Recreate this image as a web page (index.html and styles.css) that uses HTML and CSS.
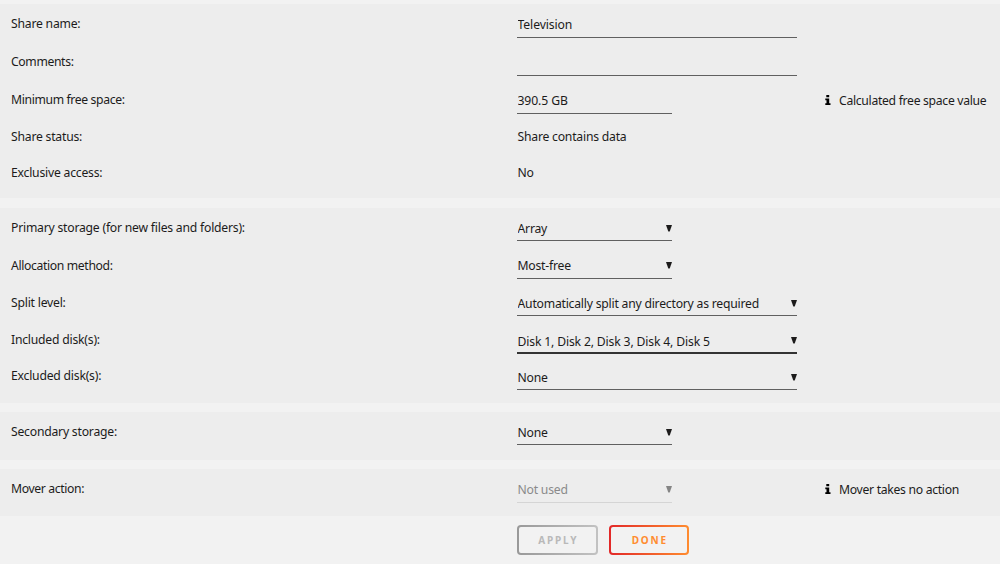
FILE: index.html
```html
<!DOCTYPE html>
<html lang="en">
<head>
    <meta charset="UTF-8">
    <meta name="viewport" content="width=device-width, initial-scale=1.0">
    <title>Share Settings</title>
    <link rel="stylesheet" href="styles.css">
</head>
<body>
    <form class="share-form">
        <section class="panel panel-share">
            <div class="row">
                <label for="shareName">Share name:</label>
                <div class="field wide"><input type="text" id="shareName" value="Television"></div>
            </div>
            <div class="row">
                <label class="tight" for="shareComment">Comments:</label>
                <div class="field wide"><input type="text" id="shareComment" value=""></div>
            </div>
            <div class="row">
                <label class="tight" for="shareFloor">Minimum free space:</label>
                <div class="field"><input type="text" id="shareFloor" value="390.5 GB"></div>
                <div class="info">
                    <svg width="6" height="10" viewBox="0 0 6 10"><path d="M1.300 0h2.900v2.200H1.300zM.3 3.400H4.200v4.800h1.300V10H.3V8.200h1.200V5.200H.3z"/></svg>
                    <span>Calculated free space value</span>
                </div>
            </div>
            <div class="row row-text">
                <label>Share status:</label>
                <span class="plain">Share contains data</span>
            </div>
            <div class="row row-text">
                <label>Exclusive access:</label>
                <span class="plain">No</span>
            </div>
        </section>

        <section class="panel panel-primary">
            <div class="row">
                <label for="primary">Primary storage (for new files and folders):</label>
                <div class="field">
                    <select id="primary"><option>Array</option></select>
                    <svg class="arrow" width="6" height="7" viewBox="0 0 6 7"><path d="M0 0h6L3.700 6.500H2.300z"/></svg>
                </div>
            </div>
            <div class="row">
                <label class="tight" for="allocator">Allocation method:</label>
                <div class="field">
                    <select id="allocator"><option>Most-free</option></select>
                    <svg class="arrow" width="6" height="7" viewBox="0 0 6 7"><path d="M0 0h6L3.700 6.500H2.300z"/></svg>
                </div>
            </div>
            <div class="row">
                <label for="splitLevel">Split level:</label>
                <div class="field wide">
                    <select id="splitLevel"><option>Automatically split any directory as required</option></select>
                    <svg class="arrow" width="6" height="7" viewBox="0 0 6 7"><path d="M0 0h6L3.700 6.500H2.300z"/></svg>
                </div>
            </div>
            <div class="row row-include">
                <label for="include">Included disk(s):</label>
                <div class="field wide multi">
                    <select id="include"><option>Disk 1, Disk 2, Disk 3, Disk 4, Disk 5</option></select>
                    <svg class="arrow" width="6" height="7" viewBox="0 0 6 7"><path d="M0 0h6L3.700 6.500H2.300z"/></svg>
                </div>
            </div>
            <div class="row">
                <label for="exclude">Excluded disk(s):</label>
                <div class="field wide">
                    <select id="exclude"><option>None</option></select>
                    <svg class="arrow" width="6" height="7" viewBox="0 0 6 7"><path d="M0 0h6L3.700 6.500H2.300z"/></svg>
                </div>
            </div>
        </section>

        <section class="panel panel-secondary">
            <div class="row">
                <label for="secondary">Secondary storage:</label>
                <div class="field">
                    <select id="secondary"><option>None</option></select>
                    <svg class="arrow" width="6" height="7" viewBox="0 0 6 7"><path d="M0 0h6L3.700 6.500H2.300z"/></svg>
                </div>
            </div>
        </section>

        <section class="panel panel-mover">
            <div class="row">
                <label class="tight" for="mover">Mover action:</label>
                <div class="field disabled">
                    <select id="mover" disabled><option>Not used</option></select>
                    <svg class="arrow" width="6" height="7" viewBox="0 0 6 7"><path d="M0 0h6L3.700 6.500H2.300z"/></svg>
                </div>
                <div class="info">
                    <svg width="6" height="10" viewBox="0 0 6 10"><path d="M1.300 0h2.900v2.200H1.300zM.3 3.400H4.200v4.800h1.300V10H.3V8.200h1.200V5.200H.3z"/></svg>
                    <span class="tight">Mover takes no action</span>
                </div>
            </div>
        </section>

        <div class="buttons">
            <button type="button" class="btn btn-apply" disabled>APPLY</button>
            <button type="button" class="btn btn-done">DONE</button>
        </div>
    </form>
</body>
</html>
```
FILE: styles.css
```css
* {
    box-sizing: border-box;
}

body {
    margin: 0;
    background-color: #f2f2f2;
    color: #1c1b1b;
    font-family: "Noto Sans", sans-serif;
    font-size: 12.2px;
    letter-spacing: -0.22px;
    overflow: hidden;
}

.share-form {
    padding-top: 4px;
}

.panel {
    background-color: #ededed;
    padding-left: 11px;
}

.panel-share {
    height: 194px;
    margin-bottom: 10px;
}

.panel-primary {
    height: 195px;
    margin-bottom: 9px;
}

.panel-secondary {
    height: 48px;
    margin-bottom: 9px;
}

.panel-mover {
    height: 47px;
}

.row {
    display: grid;
    grid-template-columns: 506px 308px 1fr;
    align-items: start;
    height: 38px;
}

.row-text {
    height: 35.5px;
}

.panel-primary .row {
    height: 37.5px;
}

.panel-primary .row-include {
    height: 36.5px;
}

label,
.plain {
    line-height: 39px;
}

.row-text label,
.row-text .plain {
    line-height: 38px;
}

.plain {
    padding-left: 0.5px;
}

.tight {
    letter-spacing: -0.36px;
}

.panel-primary label,
.panel-secondary label,
.panel-mover label {
    line-height: 40px;
}

.panel-primary .row:nth-child(n+4) label {
    line-height: 38px;
}

.field {
    position: relative;
    width: 155px;
    height: 34px;
    border-bottom: 1px solid #606060;
}

.panel-primary .field,
.panel-secondary .field {
    height: 33px;
}

.field.wide {
    width: 280px;
}

.field input,
.field select {
    appearance: none;
    display: block;
    width: 100%;
    height: 33px;
    margin: 0;
    padding: 7px 0 0 0.5px;
    border: none;
    outline: none;
    background: transparent;
    color: #1c1b1b;
    font: inherit;
    letter-spacing: inherit;
}

.field input {
    letter-spacing: -0.1px;
}

.panel-primary .field.multi {
    height: 33px;
    border-bottom: 2px solid #333;
}

.field.multi select {
    padding-top: 9px;
    letter-spacing: -0.16px;
}

.field .arrow {
    position: absolute;
    top: 16.5px;
    right: 0;
    fill: #1c1b1b;
}

.field.disabled {
    border-bottom-color: #d5d5d5;
}

.field.disabled select {
    color: #8a8a8a;
    opacity: 1;
}

.field.disabled .arrow {
    fill: #858585;
}

.info {
    display: flex;
    align-items: center;
    gap: 8px;
    height: 40px;
    white-space: nowrap;
}

.info span {
    letter-spacing: -0.3px;
}

.buttons {
    display: flex;
    gap: 11px;
    padding: 9px 0 0 517px;
}

.btn {
    width: 80.5px;
    height: 30px;
    padding: 0 0 0 2px;
    border: 2px solid transparent;
    border-radius: 4px;
    font-family: "Noto Sans", sans-serif;
    font-size: 10px;
    font-weight: bold;
    letter-spacing: 1.8px;
}

.btn-apply {
    color: #b9b9b9;
    background: linear-gradient(#f2f2f2, #f2f2f2) padding-box, linear-gradient(90deg, #999, #c2c2c2) border-box;
}

.btn-done {
    color: #ff8c2f;
    background: linear-gradient(#f2f2f2, #f2f2f2) padding-box, linear-gradient(90deg, #e22828, #ff8c2f) border-box;
}
```
